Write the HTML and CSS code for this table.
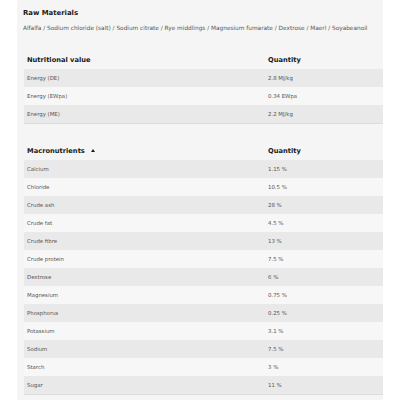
FILE: index.html
```html
<!DOCTYPE html>
<html>
<head>
<meta charset="utf-8">
<link rel="stylesheet" href="styles.css">
</head>
<body>
<div class="panel">
  <h2 class="title">Raw Materials</h2>
  <p class="ingredients">Alfalfa / Sodium chloride (salt) / Sodium citrate / Rye middlings / Magnesium fumarate / Dextrose / Maerl / Soyabeanoil</p>

  <div class="table first">
    <div class="row head"><div class="cell">Nutritional value</div><div class="cell">Quantity</div></div>
    <div class="row"><div class="cell">Energy (DE)</div><div class="cell">2.8 MJ/kg</div></div>
    <div class="row"><div class="cell">Energy (EWpa)</div><div class="cell">0.34 EWpa</div></div>
    <div class="row"><div class="cell">Energy (ME)</div><div class="cell">2.2 MJ/kg</div></div>
  </div>

  <div class="table second">
    <div class="row head"><div class="cell">Macronutrients <span class="arrow"></span></div><div class="cell">Quantity</div></div>
    <div class="row"><div class="cell">Calcium</div><div class="cell">1.15 %</div></div>
    <div class="row"><div class="cell">Chloride</div><div class="cell">10.5 %</div></div>
    <div class="row"><div class="cell">Crude ash</div><div class="cell">28 %</div></div>
    <div class="row"><div class="cell">Crude fat</div><div class="cell">4.5 %</div></div>
    <div class="row"><div class="cell">Crude fibre</div><div class="cell">13 %</div></div>
    <div class="row"><div class="cell">Crude protein</div><div class="cell">7.5 %</div></div>
    <div class="row"><div class="cell">Dextrose</div><div class="cell">6 %</div></div>
    <div class="row"><div class="cell">Magnesium</div><div class="cell">0.75 %</div></div>
    <div class="row"><div class="cell">Phosphorus</div><div class="cell">0.25 %</div></div>
    <div class="row"><div class="cell">Potassium</div><div class="cell">3.1 %</div></div>
    <div class="row"><div class="cell">Sodium</div><div class="cell">7.5 %</div></div>
    <div class="row"><div class="cell">Starch</div><div class="cell">3 %</div></div>
    <div class="row"><div class="cell">Sugar</div><div class="cell">11 %</div></div>
  </div>
</div>
</body>
</html>
```
FILE: styles.css
```css
html, body {
  margin: 0;
  padding: 0;
  background: #ffffff;
}
body {
  font-family: "DejaVu Sans", "Noto Sans", sans-serif;
  color: #555;
}
.panel {
  margin-left: 17px;
  width: 366px;
  min-height: 400px;
  background: #f5f5f5;
  padding: 7px 0 0 7px;
  box-sizing: border-box;
}
.title {
  margin: 0 0 0 -1px;
  font-size: 6.9px;
  line-height: 12px;
  font-weight: bold;
  color: #1a1a1a;
}
.ingredients {
  margin: 4px 0 0 -1px;
  font-size: 5.8px;
  line-height: 10px;
  color: #555;
  white-space: nowrap;
}
.table.first {
  margin-top: 17px;
}
.table.second {
  margin-top: 17px;
}
.row {
  display: grid;
  grid-template-columns: 241px 1fr;
  height: 18px;
  align-items: center;
  font-size: 5.4px;
  color: #555;
}
.row:nth-child(even) {
  background: #e9e9e9;
}
.row:nth-child(odd) {
  background: #f7f7f7;
}
.row.head {
  background: #f5f5f5;
  height: 19px;
  font-size: 6.7px;
  font-weight: bold;
  color: #1a1a1a;
}
.table .row:last-child {
  border-bottom: 1px solid #dcdcdc;
}
.cell {
  padding-left: 3px;
  white-space: nowrap;
}
.arrow {
  display: inline-block;
  width: 0;
  height: 0;
  margin-left: 4px;
  vertical-align: 1px;
  border-left: 2.5px solid transparent;
  border-right: 2.5px solid transparent;
  border-bottom: 3px solid #1a1a1a;
}
```
